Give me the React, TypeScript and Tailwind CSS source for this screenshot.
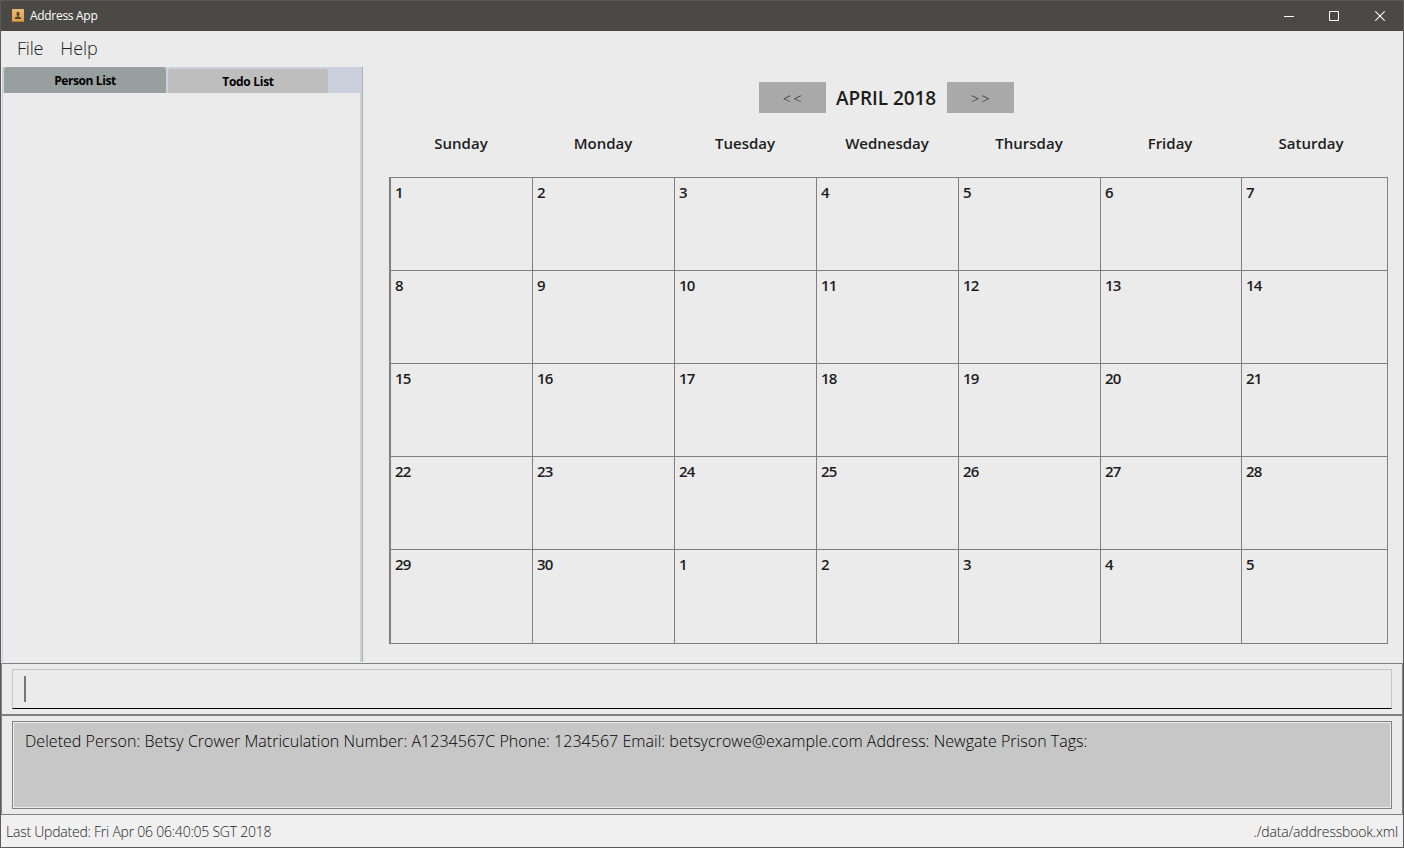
const DAYS = ['Sunday', 'Monday', 'Tuesday', 'Wednesday', 'Thursday', 'Friday', 'Saturday'];

const WEEKS = [
  [1, 2, 3, 4, 5, 6, 7],
  [8, 9, 10, 11, 12, 13, 14],
  [15, 16, 17, 18, 19, 20, 21],
  [22, 23, 24, 25, 26, 27, 28],
  [29, 30, 1, 2, 3, 4, 5],
];

function AppIcon() {
  return (
    <svg width="14" height="14" viewBox="0 0 14 14" className="shrink-0">
      <defs>
        <linearGradient id="cover" x1="0" y1="0" x2="0" y2="1">
          <stop offset="0" stopColor="#e9bd78" />
          <stop offset="1" stopColor="#d79f49" />
        </linearGradient>
      </defs>
      <rect x="0" y="0.5" width="2.5" height="12.5" rx="0.8" fill="#5e4028" />
      <rect x="1" y="0" width="12" height="13" rx="1" fill="url(#cover)" />
      <rect x="1" y="12" width="12" height="1" fill="#b97f35" />
      <ellipse cx="7" cy="4.8" rx="1.6" ry="2" fill="#59452c" />
      <path d="M6.2 6h1.6v1.800l2.300.6v1.700H3.900V8.400l2.300-.6z" fill="#59452c" />
    </svg>
  );
}

function TitleBar() {
  return (
    <header className="flex h-[30px] shrink-0 items-center bg-[#4b4946] pl-[10px] text-white">
      <AppIcon />
      <span className="ml-[5px] text-[12px] tracking-[-0.3px]">Address App</span>
      <div className="ml-auto flex h-full items-center pr-[18px]">
        <svg width="11" height="11" viewBox="0 0 11 11" className="mr-[34px]">
          <path d="M0 5.500h10" stroke="#fff" />
        </svg>
        <svg width="10" height="10" viewBox="0 0 10 10" className="mr-[36px]">
          <path d="M.5.5h9v9h-9z" fill="none" stroke="#fff" />
        </svg>
        <svg width="10" height="10" viewBox="0 0 10 10">
          <path d="M.3.3l9.400 9.400M9.700.3L.3 9.700" stroke="#fff" strokeWidth="1.100" />
        </svg>
      </div>
    </header>
  );
}

function MenuBar() {
  return (
    <nav className="flex h-9 shrink-0 items-center gap-[18px] pb-[2px] pl-4 text-[18px] font-light text-[#1d1d1d]">
      <span className="tracking-[-0.2px]">File</span>
      <span className="-ml-px tracking-[-0.1px]">Help</span>
    </nav>
  );
}

function ListPanel() {
  return (
    <aside className="ml-px flex h-[595px] w-[361px] shrink-0 flex-col border-r border-[#b1b1b1] bg-[#cad1dc] pr-[2px] pl-px text-[12px] font-bold text-black">
      <div className="flex h-[26px] shrink-0 items-end gap-[2px] pl-px">
        <div className="flex h-[26px] w-[162px] items-center justify-center rounded-t-[3px] bg-[#98a09f] pt-[2px]">
          <span className="tracking-[-0.4px]">Person List</span>
        </div>
        <div className="flex h-6 w-[160px] items-center justify-center rounded-t-[3px] bg-[#bebebe] pt-[2px]">
          <span className="tracking-[-0.3px]">Todo List</span>
        </div>
      </div>
      <div className="flex-1 bg-[#ebebeb]" />
    </aside>
  );
}

function Calendar() {
  return (
    <main className="flex flex-1 flex-col pl-[26px] font-semibold text-[#1d1d1d]">
      <div className="mt-[15px] flex h-[31px] w-[995px] items-center justify-center">
        <button className="h-[31px] w-[67px] bg-[#a9a9a9] pt-[2px] pl-[2px] text-[14px] font-light tracking-[2.4px]">&lt;&lt;</button>
        <h1 className="w-[121px] pt-[2px] pr-px text-center text-[19px] tracking-[-0.1px] whitespace-nowrap">APRIL 2018</h1>
        <button className="h-[31px] w-[67px] bg-[#a9a9a9] pt-[2px] pl-[2px] text-[14px] font-light tracking-[2.4px]">&gt;&gt;</button>
      </div>
      <div className="grid h-16 w-[994px] grid-cols-[142px_142px_142px_142px_142px_140px_142px] pt-[19px] pl-px text-center text-[15px]">
        {DAYS.map((day) => (
          <span key={day}>{day}</span>
        ))}
      </div>
      <div className="grid h-[467px] w-[999px] grid-cols-[142px_142px_142px_142px_142px_141px_146px] grid-rows-[93px_93px_93px_93px_94px] border-t border-l-2 border-[#808080]">
        {WEEKS.flat().map((date, i) => (
          <div key={i} className="border-r border-b border-[#808080] pt-[3px] pl-[4px] text-[15px] leading-[22px]">
            <span className="tracking-[-0.9px]">{date}</span>
          </div>
        ))}
      </div>
    </main>
  );
}

export default function App() {
  return (
    <div className="flex h-[848px] w-[1404px] flex-col overflow-hidden border border-[#5a5a5a] bg-[#ebebeb] font-['Open_Sans','Noto_Sans',sans-serif]">
      <TitleBar />
      <MenuBar />
      <div className="flex h-[596px] shrink-0">
        <ListPanel />
        <Calendar />
      </div>
      <section className="h-[52px] shrink-0 border border-[#808080] px-[10px] pt-[5px]">
        <div className="flex h-10 items-center border border-[#c6c6c6] border-b-black pl-[11px]">
          <div className="h-[26px] w-[2px] bg-[#777777]" />
        </div>
      </section>
      <section className="h-[100px] shrink-0 border border-[#808080] px-[10px] pt-[5px]">
        <div className="h-[88px] border border-[#808080] p-px">
          <p className="h-full bg-[#c7c7c7] pt-[6px] pl-[11px] text-[16px] leading-6 font-light tracking-[0.037px] whitespace-nowrap text-black">
            Deleted Person: Betsy Crower Matriculation Number: A1234567C Phone: 1234567 Email: betsycrowe@example.com Address: Newgate Prison Tags:
          </p>
        </div>
      </section>
      <footer className="flex flex-1 items-center justify-between bg-[#f0f0f0] px-[5px] text-[14px] font-light text-[#1d1d1d]">
        <span className="tracking-[-0.23px]">Last Updated: Fri Apr 06 06:40:05 SGT 2018</span>
        <span className="tracking-[-0.18px]">./data/addressbook.xml</span>
      </footer>
    </div>
  );
}
